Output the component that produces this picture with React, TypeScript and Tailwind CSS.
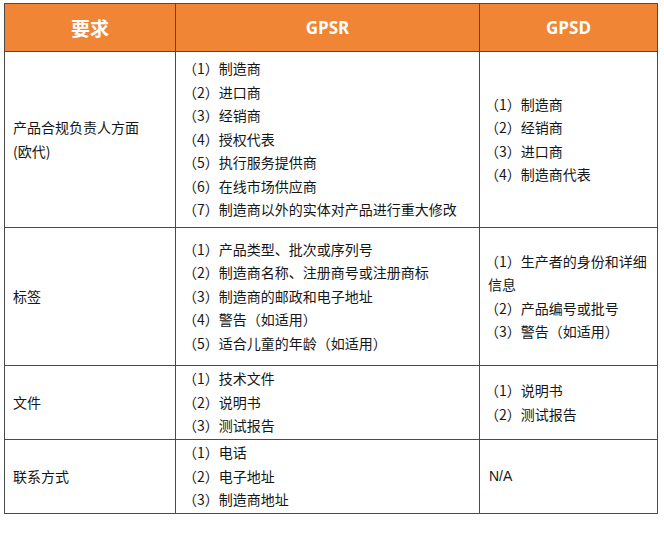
const cjk = '"Noto Sans CJK SC", "Noto Sans", sans-serif'

type Row = {
  label: React.ReactNode
  gpsr: string[]
  gpsd: React.ReactNode
  h: string
}

const rows: Row[] = [
  {
    label: (
      <>
        产品合规负责人方面
        <br />
        (欧代)
      </>
    ),
    gpsr: [
      '（1）制造商',
      '（2）进口商',
      '（3）经销商',
      '（4）授权代表',
      '（5）执行服务提供商',
      '（6）在线市场供应商',
      '（7）制造商以外的实体对产品进行重大修改',
    ],
    gpsd: ['（1）制造商', '（2）经销商', '（3）进口商', '（4）制造商代表'].map((t) => <div key={t}>{t}</div>),
    h: 'h-[176px]',
  },
  {
    label: '标签',
    gpsr: [
      '（1）产品类型、批次或序列号',
      '（2）制造商名称、注册商号或注册商标',
      '（3）制造商的邮政和电子地址',
      '（4）警告（如适用）',
      '（5）适合儿童的年龄（如适用）',
    ],
    gpsd: (
      <>
        <div>
          （1）生产者的身份和详细
          <br />
          <span className="pl-[3px]">信息</span>
        </div>
        <div>（2）产品编号或批号</div>
        <div>（3）警告（如适用）</div>
      </>
    ),
    h: 'h-[138px]',
  },
  {
    label: '文件',
    gpsr: ['（1）技术文件', '（2）说明书', '（3）测试报告'],
    gpsd: ['（1）说明书', '（2）测试报告'].map((t) => <div key={t}>{t}</div>),
    h: 'h-[74px]',
  },
  {
    label: '联系方式',
    gpsr: ['（1）电话', '（2）电子地址', '（3）制造商地址'],
    gpsd: <div className="pl-[4px] font-['Liberation_Sans',sans-serif] text-[14px]">N/A</div>,
    h: 'h-[74px]',
  },
]

export default function App() {
  return (
    <div className="bg-white w-[664px] h-[542px] pt-[3px] pl-[4px]" style={{ fontFamily: cjk }}>
      <div className="w-[654px] border-l border-t border-[#4a4a4a] grid grid-cols-[171px_304px_178px] text-[14px] leading-[23.5px] text-[#161616]">
        <div className="h-[48px] bg-[#ef8535] border-r border-b border-[#4a4a4a] flex items-center justify-center text-white font-bold text-[19px]">
          要求
        </div>
        <div className="h-[48px] bg-[#ef8535] border-r border-b border-[#4a4a4a] flex items-center justify-center text-white font-bold text-[17px] font-['Open_Sans',sans-serif]">
          GPSR
        </div>
        <div className="h-[48px] bg-[#ef8535] border-r border-b border-[#4a4a4a] flex items-center justify-center text-white font-bold text-[17px] font-['Open_Sans',sans-serif]">
          GPSD
        </div>

        {rows.map((r, i) => (
          <div key={i} className="contents">
            <div className={`${r.h} border-r border-b border-[#4a4a4a] flex flex-col justify-center pl-[8px]`}>
              <div>{r.label}</div>
            </div>
            <div className={`${r.h} border-r border-b border-[#4a4a4a] flex flex-col justify-center pl-[7px]`}>
              {r.gpsr.map((t) => (
                <div key={t}>{t}</div>
              ))}
            </div>
            <div className={`${r.h} border-r border-b border-[#4a4a4a] flex flex-col justify-center pl-[5px]`}>
              {r.gpsd}
            </div>
          </div>
        ))}
      </div>
    </div>
  )
}
